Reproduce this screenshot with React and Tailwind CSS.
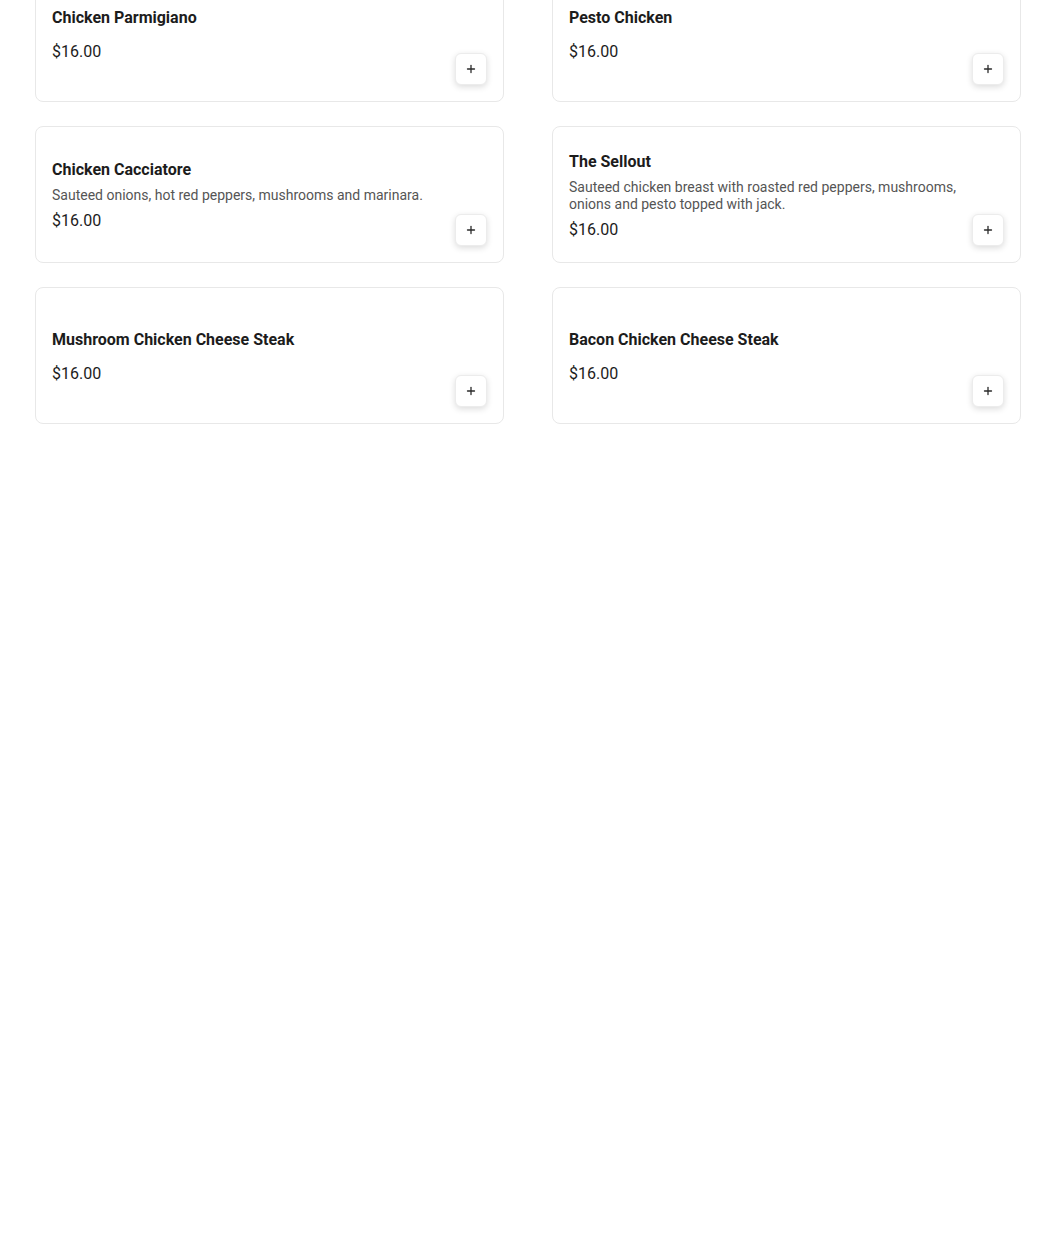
import React from 'react';
import { Plus } from 'lucide-react';

const items = [
  { id: 1, name: 'Chicken Parmigiano', description: '', price: '$16.00' },
  { id: 2, name: 'Pesto Chicken', description: '', price: '$16.00' },
  {
    id: 3,
    name: 'Chicken Cacciatore',
    description: 'Sauteed onions, hot red peppers, mushrooms and marinara.',
    price: '$16.00',
  },
  {
    id: 4,
    name: 'The Sellout',
    description:
      'Sauteed chicken breast with roasted red peppers, mushrooms, onions and pesto topped with jack.',
    price: '$16.00',
  },
  { id: 5, name: 'Mushroom Chicken Cheese Steak', description: '', price: '$16.00' },
  { id: 6, name: 'Bacon Chicken Cheese Steak', description: '', price: '$16.00' },
];

const MenuCard = ({ item }) => (
  <div className="h-[137px] rounded-lg border border-[#e8e8e8] bg-white flex justify-between gap-2 px-4">
    {/* Info */}
    <div className="flex flex-col justify-center pt-[2px]">
      <h3 className="text-base leading-6 font-bold text-[#1c1c1c] mb-[5px]">{item.name}</h3>
      <p className="text-sm leading-[17px] text-[#555555] mb-[5px]">{item.description}</p>
      <span className="text-base leading-6 text-[#1c1c1c]">{item.price}</span>
    </div>

    {/* Add button */}
    <button className="self-end mb-4 shrink-0 w-8 h-8 rounded-md border border-[#ececec] bg-white shadow-[0_2px_6px_rgba(0,0,0,0.14)] flex items-center justify-center text-[#2a2a2a]">
      <Plus size={12} strokeWidth={2.6} />
    </button>
  </div>
);

const App = () => {
  return (
    <div className="min-h-screen bg-white font-['Roboto',_'Liberation_Sans',_sans-serif] overflow-hidden">
      <div className="pl-[35px] -mt-[35px]">
        <div className="w-[986px] grid grid-cols-2 gap-x-[48px] gap-y-[24px]">
          {items.map((item) => (
            <MenuCard key={item.id} item={item} />
          ))}
        </div>
      </div>
    </div>
  );
};

export default App;
